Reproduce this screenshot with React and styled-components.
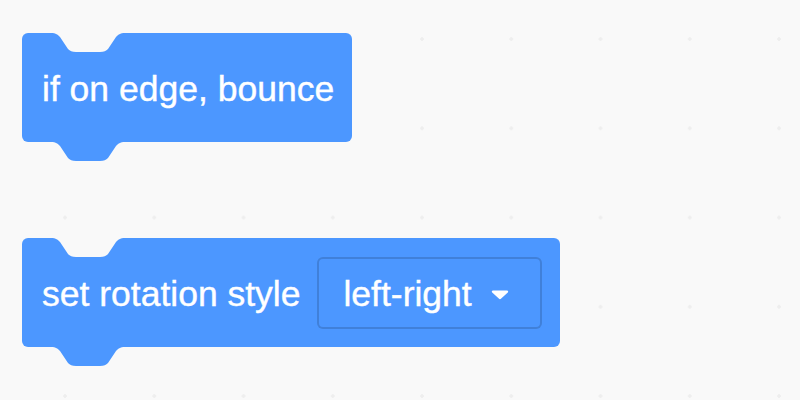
import React from 'react';
import styled, { createGlobalStyle } from 'styled-components';

const canvas = '#f9f9f9';
const motion = '#4c97ff';

// notch / tab outline, 74px wide, 1px strip on top so the seam is hidden
const notchPath =
  "path('M0,0 H74 V1 C69,1 67,3 65,5 L57,17 C55,19 53,20 49,20 H25 C21,20 19,19 17,17 L9,5 C7,3 5,1 0,1 Z')";

const GlobalStyle = createGlobalStyle`
  html, body {
    margin: 0;
    padding: 0;
  }
  body {
    background-color: ${canvas};
    font-family: "Liberation Sans", Arial, sans-serif;
  }
`;

const Workspace = styled.div`
  width: 800px;
  height: 400px;
  box-sizing: border-box;
  padding: 33px 0 0 22px;
  display: flex;
  flex-direction: column;
  align-items: flex-start;
  gap: 96px;
  overflow: hidden;
  background-color: ${canvas};
  background-image: radial-gradient(circle, #eeeeee 0 1.5px, transparent 2.1px);
  background-size: 89.25px 89.25px;
  background-position: 20.4px -5.6px;
`;

const Block = styled.div`
  position: relative;
  display: inline-flex;
  align-items: center;
  gap: 17px;
  height: 109px;
  box-sizing: border-box;
  padding: 4px 18px 0 20px;
  background: ${motion};
  border-radius: 6px;
  color: #fff;
  font-size: 35.5px;
  white-space: nowrap;
  -webkit-text-stroke: 0.4px #fff;

  &::before,
  &::after {
    content: '';
    position: absolute;
    left: 29px;
    width: 74px;
    height: 21px;
    clip-path: ${notchPath};
  }

  &::before {
    top: -1px;
    background: ${canvas};
  }

  &::after {
    top: calc(100% - 1px);
    background: ${motion};
  }
`;

const Label = styled.span`
  line-height: 1;
`;

const Dropdown = styled.div`
  display: inline-flex;
  align-items: center;
  gap: 19px;
  height: 72px;
  margin-top: -4px;
  box-sizing: border-box;
  padding: 4px 31px 0 24px;
  border: 2px solid rgba(0, 0, 0, 0.15);
  border-radius: 6px;
  background: ${motion};
`;

const Caret = () => (
  <svg width="18" height="11" viewBox="0 0 18 11">
    <path d="M2 1.5 H16 C17.2 1.5 17.6 2.6 16.8 3.4 L10.2 9.6 C9.5 10.3 8.5 10.3 7.8 9.6 L1.2 3.4 C0.4 2.6 0.8 1.5 2 1.5 Z" fill="#fff" />
  </svg>
);

export default function App() {
  return (
    <>
      <GlobalStyle />
      <Workspace>
        <Block>
          <Label>if on edge, bounce</Label>
        </Block>
        <Block>
          <Label>set rotation style</Label>
          <Dropdown>
            <Label>left-right</Label>
            <Caret />
          </Dropdown>
        </Block>
      </Workspace>
    </>
  );
}
